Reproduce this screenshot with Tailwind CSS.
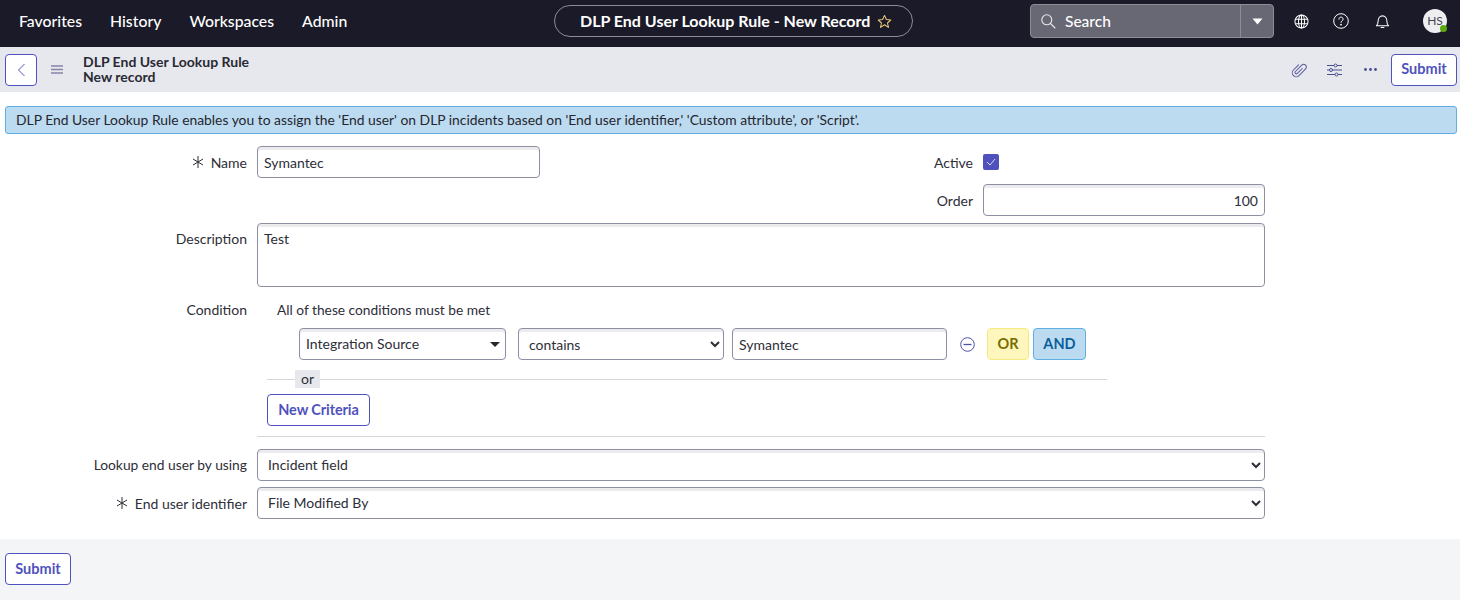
<!DOCTYPE html>
<html>
<head>
  <meta charset="UTF-8">
  <title>DLP End User Lookup Rule - New Record</title>
  <script src="https://cdn.jsdelivr.net/npm/@tailwindcss/browser@4"></script>
</head>
<body class="bg-white h-[600px] overflow-hidden flex flex-col font-['Lato',sans-serif] text-[14px] text-[#2e2e38]">

  <!-- top nav -->
  <header class="h-[47px] shrink-0 bg-[#1a1a28] flex items-center pb-[5px] text-white relative">
    <nav class="flex items-center gap-[28px] pl-[19px] text-[15.800px] font-medium">
      <span>Favorites</span>
      <span>History</span>
      <span>Workspaces</span>
      <span>Admin</span>
    </nav>
    <div class="absolute left-[554px] top-[5px] w-[359px] h-[32px] border border-[#8d8d96] rounded-full flex items-center pl-[25px] gap-[7px]">
      <span class="text-[16px] font-bold whitespace-nowrap mb-[1px]">DLP End User Lookup Rule - New Record</span>
      <svg class="w-[15px] h-[15px]" viewBox="0 0 16 16" fill="none" stroke="#e8c676" stroke-width="1.1" stroke-linejoin="round"><path d="M8 1.500l2 4.400 4.700.5-3.500 3.200 1 4.700L8 11.500l-4.200 2.800 1-4.700L1.300 6.400 6 5.900z"/></svg>
    </div>
    <div class="ml-auto flex items-center">
      <div class="w-[244px] h-[34px] bg-[#686874] border border-[#8d8d96] rounded-[4px] flex items-center">
        <svg class="w-[16px] h-[16px] ml-[9px]" viewBox="0 0 16 16" fill="none" stroke="#e8e8ec" stroke-width="1.1" stroke-linecap="round"><circle cx="6.800" cy="6.800" r="5"/><path d="M10.500 10.500l4.500 4.500"/></svg>
        <span class="ml-[9px] mt-[1px] text-[15.500px] font-medium flex-1">Search</span>
        <div class="w-[33px] h-full border-l border-[#8d8d96] flex items-center justify-center">
          <svg class="w-[11px] h-[7px]" viewBox="0 0 11 7" fill="white"><path d="M0.500 0.500h10l-5 6z"/></svg>
        </div>
      </div>
      <svg class="w-[15px] h-[15px] ml-[20px]" viewBox="0 0 16 16" fill="none" stroke="white" stroke-width="1.100"><circle cx="8" cy="8" r="7"/><ellipse cx="8" cy="8" rx="3.200" ry="7"/><path d="M1.500 5.500h13M1.500 10.500h13M8 1v14"/></svg>
      <svg class="w-[16px] h-[16px] ml-[24px]" viewBox="0 0 16 16" fill="none" stroke="white" stroke-width="1"><circle cx="8" cy="8" r="7.300"/><path d="M5.900 6.200c0-1.300 1-2.100 2.100-2.100s2.100.8 2.100 2c0 1.700-2.100 1.700-2.100 3.300" stroke-linecap="round"/><circle cx="8" cy="11.700" r=".5" fill="white"/></svg>
      <svg class="w-[15px] h-[15px] ml-[26px]" viewBox="0 0 16 16" fill="none" stroke="white" stroke-width="1.100" stroke-linejoin="round"><path d="M1.500 12.500c1.300-1 1.800-2 1.800-4.700C3.300 4.500 5.300 2 8 2s4.700 2.500 4.700 5.800c0 2.700.5 3.700 1.800 4.700z"/><path d="M6.500 14.500h3" stroke-linecap="round"/></svg>
      <div class="relative w-[24px] h-[24px] ml-[33px] mr-[13px] rounded-full bg-[#eeeef0] text-[#45454f] text-[12px] flex items-center justify-center">
        HS
        <span class="absolute right-0 bottom-[1px] w-[7px] h-[7px] rounded-full bg-[#5ba80f]"></span>
      </div>
    </div>
  </header>

  <!-- record toolbar -->
  <div class="h-[45px] shrink-0 bg-[#e6e8ed] flex items-center pl-[5px] pr-[3px]">
    <button class="w-[32px] h-[32px] bg-white border border-[#4f52bd] rounded-[4px] flex items-center justify-center">
      <svg class="w-[9px] h-[14px]" viewBox="0 0 9 14" fill="none" stroke="#4f52bd" stroke-width="1"><path d="M7.500 1L1.500 7l6 6"/></svg>
    </button>
    <svg class="w-[12px] h-[9px] ml-[14px]" viewBox="0 0 12 9" stroke="#8584a8" stroke-width="1.300"><path d="M0 1h12M0 4.500h12M0 8h12"/></svg>
    <div class="ml-[20px] mb-[2px] text-[14px] leading-[15px] font-bold text-[#2a2a34]">
      <div>DLP End User Lookup Rule</div>
      <div>New record</div>
    </div>
    <svg class="w-[18px] h-[18px] ml-auto" viewBox="0 0 16 16" fill="none" stroke="#5a5c9e" stroke-width=".9" stroke-linecap="round"><g transform="rotate(45 8 8)"><path d="M4.500 5v6.500a3.500 3.500 0 0 0 7 0V3.200a2.400 2.400 0 0 0-4.800 0v8a1.200 1.200 0 0 0 2.400 0V5"/></g></svg>
    <svg class="w-[15px] h-[14px] ml-[19px]" viewBox="0 0 15 14" fill="none" stroke="#4a4c8f" stroke-width="1"><path d="M0 2.500h7M10 2.500h5M0 7h2.500M5.500 7H15M0 11.500h8M11 11.500h4"/><circle cx="8.500" cy="2.500" r="1.500"/><circle cx="4" cy="7" r="1.500"/><circle cx="9.500" cy="11.500" r="1.500"/></svg>
    <svg class="w-[13px] h-[3px] ml-[22px]" viewBox="0 0 13 3" fill="#4a4c8f"><circle cx="1.500" cy="1.500" r="1.400"/><circle cx="6.500" cy="1.500" r="1.400"/><circle cx="11.500" cy="1.500" r="1.400"/></svg>
    <button class="ml-[14px] w-[66px] h-[32px] pb-[2px] bg-white border border-[#4f52bd] rounded-[4px] text-[#4f52bd] font-bold text-[14.500px]">Submit</button>
  </div>

  <!-- form -->
  <main class="bg-white pt-[14px] pb-[20px]">
    <div class="mx-[5px] w-[1452px] h-[28px] bg-[#bcdbf1] border border-[#5fb0e3] rounded-[3px] flex items-center pl-[10px] text-[13.860px] text-[#26262e]">
      DLP End User Lookup Rule enables you to assign the 'End user' on DLP incidents based on 'End user identifier,' 'Custom attribute', or 'Script'.
    </div>

    <form class="mt-[12px] w-[1265px]">
      <div class="flex justify-between">
        <div class="flex items-start">
          <label class="w-[247px] h-[32px] flex items-center justify-end gap-[7px]">
            <svg class="w-[12px] h-[12px]" viewBox="0 0 12 12" stroke="#2e2e38" stroke-width="1"><path d="M6 0v12M1 3l10 6M11 3L1 9"/></svg>
            Name
          </label>
          <input type="text" value="Symantec" class="ml-[10px] w-[283px] h-[32px] px-[6px] border border-[#8d90a3] rounded-[4px] shadow-[inset_0_3px_0_#ececef] outline-none">
        </div>
        <div class="w-[342px]">
          <div class="flex items-center h-[32px]">
            <label class="w-[50px] text-right">Active</label>
            <span class="ml-[10px] w-[16px] h-[16px] rounded-[2px] bg-[#4f52bd] flex items-center justify-center">
              <svg class="w-[10px] h-[8px]" viewBox="0 0 10 8" fill="none" stroke="#d9daf3" stroke-width="1"><path d="M1 4l3 3 5-6"/></svg>
            </span>
          </div>
          <div class="flex items-center mt-[6px]">
            <label class="w-[50px] text-right">Order</label>
            <input type="text" value="100" class="ml-[10px] w-[282px] h-[32px] px-[6px] text-right border border-[#8d90a3] rounded-[4px] shadow-[inset_0_3px_0_#ececef] outline-none">
          </div>
        </div>
      </div>

      <div class="flex mt-[7px]">
        <label class="w-[247px] pt-[5px] text-right">Description</label>
        <textarea class="ml-[10px] flex-1 h-[64px] px-[6px] pt-[4px] border border-[#8d90a3] rounded-[4px] shadow-[inset_0_3px_0_#ececef] outline-none resize-none">Test</textarea>
      </div>

      <div class="flex mt-[14px]">
        <label class="w-[247px] leading-[18px] text-right">Condition</label>
        <div class="ml-[10px] flex-1 border-b border-[#d5d6db] pb-[10px]">
          <div class="pl-[20px] leading-[18px] text-[13.750px]">All of these conditions must be met</div>
          <div class="flex items-center mt-[9px] pl-[42px]">
            <div class="relative w-[207px] h-[32px] pb-[2px] border border-[#8d90a3] rounded-[4px] shadow-[inset_0_3px_0_#ececef] flex items-center pl-[6px]">
              Integration Source
              <span class="absolute right-[5px] top-[13px] w-0 h-0 border-x-[5px] border-x-transparent border-t-[5px] border-t-[#26262e]"></span>
            </div>
            <select class="ml-[12px] w-[206px] h-[32px] pl-[6px] bg-white border border-[#8d90a3] rounded-[4px] shadow-[inset_0_3px_0_#ececef] outline-none">
              <option>contains</option>
            </select>
            <input type="text" value="Symantec" class="ml-[8px] w-[215px] h-[32px] px-[6px] border border-[#8d90a3] rounded-[4px] shadow-[inset_0_3px_0_#ececef] outline-none">
            <svg class="w-[15px] h-[15px] ml-[13px]" viewBox="0 0 15 15" fill="none" stroke="#4f52a8" stroke-width="1"><circle cx="7.500" cy="7.500" r="6.800"/><path d="M3.500 7.500h8" stroke-width="1.300"/></svg>
            <button type="button" class="ml-[12px] w-[42px] h-[32px] bg-[#fdf7bd] border border-[#f5e97f] rounded-[4px] text-[#7a6d00] font-bold text-[14.500px]">OR</button>
            <button type="button" class="ml-[4px] w-[53px] h-[32px] bg-[#bcdbf1] border border-[#5fb0e3] rounded-[4px] text-[#0a5f9c] font-bold text-[14.500px]">AND</button>
          </div>
          <div class="relative mt-[19px] ml-[10px] w-[840px] border-t border-[#d5d6db]">
            <span class="absolute left-[28px] top-[-10px] w-[25px] h-[18px] bg-[#e6e8ed] text-center leading-[18px]">or</span>
          </div>
          <button type="button" class="block mt-[14px] ml-[10px] w-[103px] h-[32px] bg-white border border-[#4f52bd] rounded-[4px] text-[#4f52bd] font-bold text-[14.500px] tracking-[-0.1px]">New Criteria</button>
        </div>
      </div>

      <div class="flex items-center mt-[12px]">
        <label class="w-[247px] text-right text-[13.800px]">Lookup end user by using</label>
        <select class="ml-[10px] flex-1 h-[32px] pl-[6px] pb-[2px] bg-white border border-[#8d90a3] rounded-[4px] shadow-[inset_0_3px_0_#ececef] outline-none">
          <option>Incident field</option>
        </select>
      </div>
      <div class="flex items-center mt-[6px]">
        <label class="w-[247px] flex items-center justify-end gap-[7px]">
          <svg class="w-[12px] h-[12px]" viewBox="0 0 12 12" stroke="#2e2e38" stroke-width="1"><path d="M6 0v12M1 3l10 6M11 3L1 9"/></svg>
          End user identifier
        </label>
        <select class="ml-[10px] flex-1 h-[32px] pl-[6px] pb-[2px] bg-white border border-[#8d90a3] rounded-[4px] shadow-[inset_0_3px_0_#ececef] outline-none">
          <option>File Modified By</option>
        </select>
      </div>
    </form>
  </main>

  <!-- footer actions -->
  <footer class="flex-1 bg-[#f4f5f7] pt-[14px] pl-[5px]">
    <button class="w-[66px] h-[32px] bg-white border border-[#4f52bd] rounded-[4px] text-[#4f52bd] font-bold text-[14.500px]">Submit</button>
  </footer>
</body>
</html>
